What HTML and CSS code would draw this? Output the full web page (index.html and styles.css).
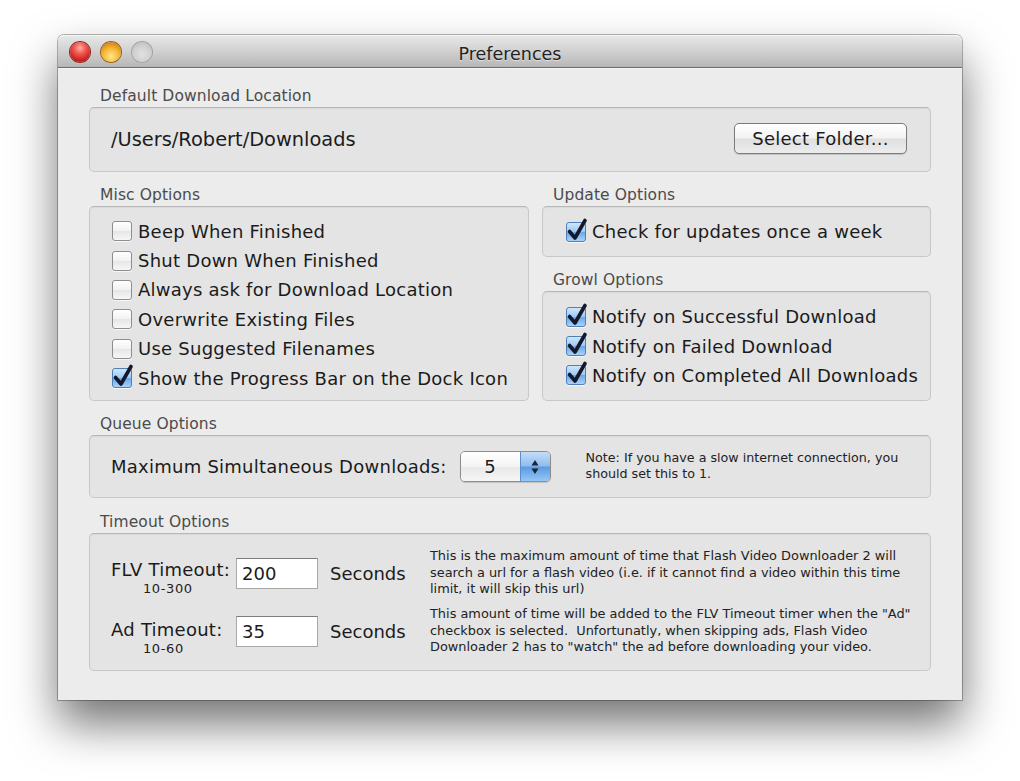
FILE: index.html
```html
<!DOCTYPE html>
<html>
<head>
<meta charset="utf-8">
<title>Preferences</title>
<link rel="stylesheet" href="styles.css">
</head>
<body>
<div class="stage">
  <div class="window">
    <div class="titlebar">
      <div class="lights">
        <span class="light red"></span>
        <span class="light yellow"></span>
        <span class="light gray"></span>
      </div>
      <div class="title">Preferences</div>
      <div></div>
    </div>
    <div class="content">
      <section class="group">
        <div class="glabel">Default Download Location</div>
        <div class="box box-location">
          <span class="path">/Users/Robert/Downloads</span>
          <button class="btn">Select Folder...</button>
        </div>
      </section>

      <div class="two-col">
        <section class="group misc">
          <div class="glabel">Misc Options</div>
          <div class="box box-list box-misc">
            <div class="cb"><span class="check"></span>Beep When Finished</div>
            <div class="cb"><span class="check"></span>Shut Down When Finished</div>
            <div class="cb"><span class="check"></span>Always ask for Download Location</div>
            <div class="cb"><span class="check"></span>Overwrite Existing Files</div>
            <div class="cb"><span class="check"></span>Use Suggested Filenames</div>
            <div class="cb"><span class="check on"><svg class="tick" viewBox="0 0 22 24"><path d="M3.5 13.5 L9 20 L19 2.5"/></svg></span>Show the Progress Bar on the Dock Icon</div>
          </div>
        </section>
        <div class="right-col">
          <section class="group">
            <div class="glabel">Update Options</div>
            <div class="box box-list box-update">
              <div class="cb"><span class="check on"><svg class="tick" viewBox="0 0 22 24"><path d="M3.5 13.5 L9 20 L19 2.5"/></svg></span>Check for updates once a week</div>
            </div>
          </section>
          <section class="group growl">
            <div class="glabel">Growl Options</div>
            <div class="box box-list box-growl">
              <div class="cb"><span class="check on"><svg class="tick" viewBox="0 0 22 24"><path d="M3.5 13.5 L9 20 L19 2.5"/></svg></span>Notify on Successful Download</div>
              <div class="cb"><span class="check on"><svg class="tick" viewBox="0 0 22 24"><path d="M3.5 13.5 L9 20 L19 2.5"/></svg></span>Notify on Failed Download</div>
              <div class="cb"><span class="check on"><svg class="tick" viewBox="0 0 22 24"><path d="M3.5 13.5 L9 20 L19 2.5"/></svg></span>Notify on Completed All Downloads</div>
            </div>
          </section>
        </div>
      </div>

      <section class="group queue">
        <div class="glabel">Queue Options</div>
        <div class="box box-queue">
          <span class="qlabel">Maximum Simultaneous Downloads:</span>
          <div class="popup">
            <span class="pval">5</span>
            <span class="parrows">
              <svg viewBox="0 0 12 20" width="12" height="20"><path d="M6 3 L9.5 8.5 L2.5 8.5 Z"/><path d="M2.5 11.5 L9.5 11.5 L6 17 Z"/></svg>
            </span>
          </div>
          <div class="note">Note: If you have a slow internet connection, you<br>should set this to 1.</div>
        </div>
      </section>

      <section class="group timeout">
        <div class="glabel">Timeout Options</div>
        <div class="box box-timeout">
          <div class="trow">
            <div class="tlabel">FLV Timeout:<span class="range">10-300</span></div>
            <div class="tinput">200</div>
            <div class="tunit">Seconds</div>
            <div class="tdesc">This is the maximum amount of time that Flash Video Downloader 2 will<br>search a url for a flash video (i.e. if it cannot find a video within this time<br>limit, it will skip this url)</div>
          </div>
          <div class="trow trow-ad">
            <div class="tlabel">Ad Timeout:<span class="range">10-60</span></div>
            <div class="tinput">35</div>
            <div class="tunit">Seconds</div>
            <div class="tdesc">This amount of time will be added to the FLV Timeout timer when the "Ad"<br>checkbox is selected.&nbsp; Unfortunatly, when skipping ads, Flash Video<br>Downloader 2 has to "watch" the ad before downloading your video.</div>
          </div>
        </div>
      </section>
    </div>
  </div>
</div>
</body>
</html>
```

FILE: styles.css
```css
* { box-sizing: border-box; }

html, body {
  min-height: 781px;
}

body {
  margin: 0;
  background: #ffffff;
  font-family: "DejaVu Sans", "Noto Sans", sans-serif;
  color: #1b1b1b;
}

.stage {
  padding: 35px 0 81px 58px;
}

.window {
  width: 904px;
  height: 665px;
  background: #ececec;
  border-radius: 6px 6px 0 0;
  box-shadow: 0 24px 46px rgba(0, 0, 0, 0.55), 0 0 0 1px rgba(0, 0, 0, 0.28);
  display: flex;
  flex-direction: column;
}

.titlebar {
  height: 33px;
  flex: none;
  display: grid;
  grid-template-columns: 1fr auto 1fr;
  align-items: center;
  background: linear-gradient(#e9e9e9, #d3d3d3 45%, #b7b7b7);
  border-bottom: 1px solid #6c6c6c;
  border-radius: 6px 6px 0 0;
  box-shadow: inset 0 1px 0 #f4f4f4;
}

.lights {
  display: flex;
  gap: 11px;
  padding-left: 12px;
  padding-top: 2px;
}

.light {
  width: 20px;
  height: 20px;
  border-radius: 50%;
  display: block;
}

.light.red {
  background: radial-gradient(circle at 50% 30%, #ffb0a8 0, #f0584f 35%, #c41b14 75%, #8f1410 100%);
  box-shadow: 0 0 0 1px #8a2a24, 0 1px 1px rgba(255,255,255,0.6);
}

.light.yellow {
  background: radial-gradient(circle at 50% 72%, #ffe68a 0, #f6b93a 45%, #d88214 80%, #a85f0d 100%);
  box-shadow: 0 0 0 1px #98621a, 0 1px 1px rgba(255,255,255,0.6);
}

.light.gray {
  background: radial-gradient(circle at 50% 60%, #e2e2e2 0, #cfcfcf 55%, #b0b0b0 100%);
  box-shadow: 0 0 0 1px #a2a2a2, 0 1px 1px rgba(255,255,255,0.6);
}

.title {
  font-size: 17.5px;
  color: #222;
  text-shadow: 0 1px 0 rgba(255,255,255,0.5);
  padding-top: 5px;
}

.content {
  flex: 1;
  padding: 17px 31px 0 31px;
  border-top: 1px solid #f6f6f6;
}

.glabel {
  height: 21px;
  line-height: 21px;
  font-size: 15.5px;
  letter-spacing: 0.1px;
  color: #4b4b4b;
  padding-left: 11px;
}

.box {
  background: #e4e4e4;
  border: 1px solid #c8c8c8;
  border-top-color: #b8b8b8;
  border-radius: 5px;
  box-shadow: inset 0 1px 1px rgba(0,0,0,0.05);
}

.box-location {
  height: 65px;
  display: flex;
  align-items: center;
  justify-content: space-between;
  padding: 0 23px 0 21px;
}

.path {
  font-size: 19.4px;
  color: #1c1c1c;
}

.btn {
  width: 173px;
  height: 31px;
  margin-top: -2px;
  font-family: inherit;
  font-size: 18px;
  letter-spacing: 0.25px;
  color: #1b1b1b;
  border: 1px solid #7b7b7b;
  border-radius: 5px;
  background: linear-gradient(#ffffff, #f3f3f3 48%, #e0e0e0 52%, #ececec);
  box-shadow: 0 1px 1px rgba(0,0,0,0.15);
  padding: 0;
}

.two-col {
  display: flex;
  gap: 13px;
  margin-top: 13px;
}

.misc {
  width: 440px;
  flex: none;
}

.right-col {
  flex: 1;
  display: flex;
  flex-direction: column;
}

.growl {
  margin-top: 13px;
}

.box-list {
  padding: 10px 0 0 22px;
}

.box-misc { height: 195px; padding-top: 9.5px; }
.box-update { height: 51px; padding-left: 23px; }
.box-growl { height: 110px; padding-left: 23px; }

.cb {
  height: 29.4px;
  display: flex;
  align-items: center;
  gap: 6px;
  font-size: 18px;
  letter-spacing: 0.25px;
  white-space: nowrap;
  color: #1b1b1b;
}

.check {
  position: relative;
  width: 20px;
  height: 20px;
  flex: none;
  border: 1px solid #8e8e8e;
  border-radius: 3px;
  background: linear-gradient(#ffffff, #f2f2f2 50%, #e6e6e6 52%, #f7f7f7);
  box-shadow: 0 1px 0 rgba(255,255,255,0.7);
}

.check.on {
  border-color: #4f7fb8;
  background: linear-gradient(#d0e6fc, #9ec9f4 48%, #6aa8ea 52%, #a8d3f8);
}

.tick {
  position: absolute;
  left: -1px;
  top: -5px;
  width: 22px;
  height: 24px;
  overflow: visible;
}

.tick path {
  fill: none;
  stroke: #15182a;
  stroke-width: 3.6;
  stroke-linecap: round;
  stroke-linejoin: round;
}

.queue {
  margin-top: 13px;
}

.timeout {
  margin-top: 14px;
}

.box-queue {
  height: 63px;
  display: flex;
  align-items: center;
  padding-left: 21px;
}

.qlabel {
  font-size: 18px;
  letter-spacing: 0.25px;
  white-space: nowrap;
}

.popup {
  margin-left: 13px;
  width: 91px;
  height: 31px;
  display: flex;
  border: 1px solid #8d8d8d;
  border-radius: 5px;
  overflow: hidden;
  box-shadow: 0 1px 1px rgba(0,0,0,0.15);
}

.pval {
  flex: 1;
  display: flex;
  align-items: center;
  justify-content: center;
  font-size: 18px;
  background: linear-gradient(#ffffff, #f4f4f4 50%, #e8e8e8 52%, #f6f6f6);
}

.parrows {
  width: 30px;
  display: flex;
  align-items: center;
  justify-content: center;
  border-left: 1px solid #5d8ec9;
  background: linear-gradient(#c4dcf7, #8fbdef 48%, #5c9ae2 52%, #94c8f6);
}

.parrows svg path {
  fill: #1b2335;
}

.note {
  margin-left: 35px;
  margin-top: -2px;
  font-size: 12.7px;
  line-height: 16px;
  color: #222;
  white-space: nowrap;
}

.box-timeout {
  height: 138px;
  padding: 14px 0 0 21px;
}

.trow {
  height: 58px;
  display: flex;
  align-items: flex-start;
}

.tlabel {
  width: 125px;
  flex: none;
  font-size: 18px;
  letter-spacing: 0.25px;
  line-height: 20px;
  margin-top: 12px;
  white-space: nowrap;
}

.trow-ad .tlabel {
  margin-top: 14px;
}

.range {
  display: block;
  font-size: 13px;
  letter-spacing: 0.6px;
  line-height: 15px;
  margin-top: 1px;
  padding-left: 32px;
  color: #222;
}

.tinput {
  width: 82px;
  height: 31px;
  flex: none;
  margin-top: 10px;
  background: #ffffff;
  border: 1px solid #a8a8a8;
  border-top-color: #7e7e7e;
  font-size: 18px;
  line-height: 29px;
  padding-left: 5px;
}

.tunit {
  width: 112px;
  flex: none;
  padding-left: 12px;
  font-size: 18px;
  line-height: 20px;
  margin-top: 16px;
}

.tdesc {
  font-size: 12.9px;
  line-height: 16.5px;
  color: #222;
  white-space: nowrap;
}
```
